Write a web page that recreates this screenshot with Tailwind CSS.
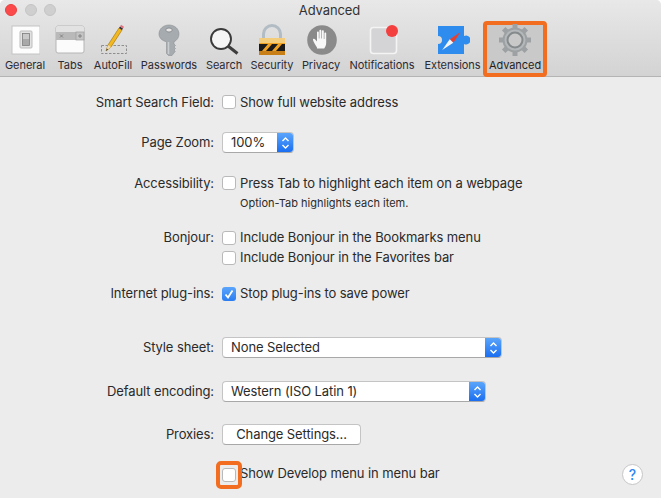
<!doctype html>
<html>
<head>
<meta charset="utf-8">
<script src="https://cdn.jsdelivr.net/npm/@tailwindcss/browser@4"></script>
</head>
<body class="bg-white">
<div class="w-[661px] h-[498px] overflow-hidden flex flex-col bg-[#ececec] rounded-t-[5px] font-['Inter','Liberation_Sans',sans-serif] text-[13px] text-[#2a2a2a] tracking-[-0.1px]">
  <!-- toolbar -->
  <div class="h-[77px] shrink-0 flex flex-col bg-gradient-to-b from-[#e8e8e8] to-[#d3d3d3] border-b border-[#b4b4b4]">
    <div class="h-[21px] shrink-0 relative flex items-center justify-center">
      <div class="absolute left-[5px] top-[4px] flex gap-[7.5px]">
        <span class="w-3 h-3 rounded-full bg-[#fc4a4a] border border-[#e8403f]"></span>
        <span class="w-3 h-3 rounded-full bg-[#cfcfcf] border border-[#c4c4c4]"></span>
        <span class="w-3 h-3 rounded-full bg-[#cfcfcf] border border-[#c4c4c4]"></span>
      </div>
      <span class="text-[#333] ml-[-2px]">Advanced</span>
    </div>
    <div class="flex-1 flex pl-[2px] text-[11px] text-[#2b2b33] tracking-[-0.05px]">
      <!-- General -->
      <div class="w-[46px] flex flex-col items-center">
        <svg width="30" height="32" viewBox="0 0 30 32" class="mt-[4px]"><rect x="2" y="1" width="28" height="28" fill="#fdfdfd" stroke="#c4c4c4"/><rect x="10" y="6" width="12" height="17" rx="1" fill="#e2e2e2" stroke="#bdbdbd"/><rect x="12.500" y="8.500" width="7" height="12" fill="#a9a9a9" stroke="#777" stroke-width=".7"/><rect x="13" y="9" width="6" height="5" fill="#c9c9c9"/></svg>
        <span class="whitespace-nowrap">General</span>
      </div>
      <!-- Tabs -->
      <div class="w-[44px] flex flex-col items-center">
        <svg width="30" height="32" viewBox="0 0 30 32" class="mt-[4px]"><rect x="1" y="1" width="28" height="27" rx="2" fill="#fbfbfb" stroke="#b5b5b5"/><path d="M1 3a2 2 0 0 1 2-2h24a2 2 0 0 1 2 2v4H1z" fill="#e2e2e2"/><rect x="1" y="7" width="28" height="8" fill="#b9b9b9"/><rect x="21" y="7" width="8" height="8" fill="#c4c4c4" stroke="#9d9d9d" stroke-width=".7"/><path d="M5 9.500l3 3M8 9.500l-3 3M25 9v4M23 11h4" stroke="#777" stroke-width=".8" fill="none"/></svg>
        <span class="whitespace-nowrap">Tabs</span>
      </div>
      <!-- AutoFill -->
      <div class="w-[42px] flex flex-col items-center">
        <svg width="30" height="32" viewBox="0 0 30 32" class="mt-[3px]"><rect x="3.500" y="21.500" width="25" height="8" fill="none" stroke="#8e8e8e" stroke-dasharray="2.500 1.500"/><g transform="translate(2 0)"><path d="M6 27l2-6L19 4l3 2L11 23z" fill="#f4b81f" stroke="#a97a10" stroke-width=".7"/><path d="M6 27l2-6 3 2z" fill="#eed9b0"/><path d="M6 27l.8-2.400 1.300.9z" fill="#333"/><path d="M19 4l1-1.600 3 2L22 6z" fill="#2f2f2f"/><path d="M20 2.400l1-1.600 3 2-1 1.600z" fill="#e0707f"/></g></svg>
        <span class="mt-[1px] whitespace-nowrap">AutoFill</span>
      </div>
      <!-- Passwords -->
      <div class="w-[70px] flex flex-col items-center">
        <svg width="30" height="32" viewBox="0 0 30 32" class="mt-[3px]"><path d="M15 1c5.500 0 10 3.800 10 9 0 3.600-2.200 6.400-5 7.800V20l1.500 1.500L20 23l1.500 1.500L20 26l1.300 1.300L18 31.500h-3.500l-2-2V17.800C7.500 16.400 5 13.600 5 10c0-5.200 4.500-9 10-9z" fill="#a6abaf" stroke="#8b9094" stroke-width=".6"/><ellipse cx="15" cy="6" rx="3.200" ry="2" fill="#e6e6e6" stroke="#74787c" stroke-width=".7"/><path d="M14.500 18v12" stroke="#caced1" stroke-width="1.500"/></svg>
        <span class="mt-[1px] whitespace-nowrap">Passwords</span>
      </div>
      <!-- Search -->
      <div class="w-[40px] flex flex-col items-center">
        <svg width="30" height="32" viewBox="0 0 30 32" class="mt-[3px]"><circle cx="12" cy="15" r="10" fill="#f5f5f5" stroke="#3a3a3a" stroke-width="1.900"/><path d="M19 22L28.500 29.500" stroke="#3d3d3d" stroke-width="3"/></svg>
        <span class="mt-[1px] whitespace-nowrap">Search</span>
      </div>
      <!-- Security -->
      <div class="w-[56px] flex flex-col items-center">
        <svg width="30" height="32" viewBox="0 0 30 32" class="mt-[3px]"><path d="M6.500 15V10a8.500 8.500 0 0 1 17 0v5" fill="none" stroke="#b2bcc4" stroke-width="3"/><rect x="2" y="14" width="26" height="17" rx="1.500" fill="#f0a224"/><path d="M2 14h26v5H2z" fill="#f3cd7b"/><path d="M2 20h26v7H2z" fill="#1b1b1b"/><path d="M5 27l6-7h4l-6 7zM15 27l6-7h4l-6 7z" fill="#f0a224"/><rect x="2" y="27" width="26" height="4" fill="#c87f18"/></svg>
        <span class="mt-[1px] whitespace-nowrap">Security</span>
      </div>
      <!-- Privacy -->
      <div class="w-[42px] flex flex-col items-center">
        <svg width="32" height="32" viewBox="0 0 32 32" class="mt-[3px]"><circle cx="17" cy="16" r="14.800" fill="#8a8a8a"/><g transform="translate(2 .5)"><path d="M10 23c-2-3-3.500-6-4-7.500-.4-1.200 1.300-1.800 2-.7L10 17V8c0-1.300 1.800-1.300 1.800 0v6h.6V6.300c0-1.400 1.900-1.400 1.900 0V14h.6V6.800c0-1.300 1.900-1.300 1.900 0V14.500h.6V9c0-1.300 1.800-1.300 1.800 0v9c0 3-1 4.500-2 6h-7.200z" fill="#f7f7f7"/></g></svg>
        <span class="mt-[1px] whitespace-nowrap">Privacy</span>
      </div>
      <!-- Notifications -->
      <div class="w-[80px] flex flex-col items-center">
        <svg width="32" height="32" viewBox="0 0 32 32" class="mt-[3px]"><rect x="4.500" y="3.500" width="26" height="26" rx="3" fill="#d4d4d6" stroke="#f4f4f4" stroke-width="1.600"/><circle cx="26" cy="7" r="6" fill="#f43f3f"/></svg>
        <span class="mt-[1px] whitespace-nowrap">Notifications</span>
      </div>
      <!-- Extensions -->
      <div class="w-[61px] flex flex-col items-center">
        <svg width="34" height="32" viewBox="0 0 34 32" class="mt-[3px]"><path d="M2 2h26v10a4.500 4.500 0 1 1 0 8v10H2V20a4 4 0 0 0 0-8z" fill="#2e8cee"/><path d="M24.500 8L13.700 15.200 17.300 18.800z" fill="#e8402f"/><path d="M6.200 26L13.700 15.200 17.300 18.800z" fill="#f5f5f5"/></svg>
        <span class="mt-[1px] whitespace-nowrap">Extensions</span>
      </div>
      <!-- Advanced -->
      <div class="w-[64px] h-[56px] flex flex-col items-center rounded-[4px] border-[4px] border-[#f26d1f] bg-[#c9c9c9] text-[#1f1f1f] z-10">
        <svg width="34" height="32" viewBox="0 0 34 32" class="mt-[-1px] shrink-0"><circle cx="17" cy="16" r="12.500" fill="#9da1a3"/><g stroke="#9da1a3" stroke-width="5"><path d="M17 0v32M1 16h32M5.700 4.700l22.600 22.600M28.300 4.700L5.700 27.300"/></g><circle cx="17" cy="16" r="10.500" fill="#b4b8ba"/><circle cx="17" cy="16" r="7.500" fill="#c9c9c9" stroke="#858a8c" stroke-width="2"/></svg>
        <span class="mt-[1px] whitespace-nowrap">Advanced</span>
      </div>
    </div>
  </div>

  <!-- settings -->
  <div class="flex-1 flex flex-col pt-[15px]">
    <div class="grid grid-cols-[214px_1fr] gap-x-[8px] h-[20px] items-center">
      <span class="text-right translate-y-[1px]">Smart Search Field:</span>
      <label class="flex items-center gap-[4px]"><span class="w-[14px] h-[14px] bg-white rounded-[3px] border border-[#b9b9b9]"></span><span class="translate-y-[1px]">Show full website address</span></label>
    </div>
    <div class="grid grid-cols-[214px_1fr] gap-x-[8px] h-[21px] items-center mt-[20px]">
      <span class="text-right">Page Zoom:</span>
      <div class="w-[72px] h-[21px] flex bg-white rounded-[4px] border border-[#c4c4c4] border-b-[#a8a8a8] overflow-hidden">
        <span class="flex-1 pl-[8px] leading-[19px]">100%</span>
        <span class="w-[16px] bg-gradient-to-b from-[#5aa5fb] to-[#1a6ef0] flex items-center justify-center"><svg width="9" height="14" viewBox="0 0 9 14" fill="none" stroke="#fff" stroke-width="1.400"><path d="M1.500 5L4.500 2l3 3M1.500 9l3 3 3-3"/></svg></span>
      </div>
    </div>
    <div class="grid grid-cols-[214px_1fr] gap-x-[8px] h-[20px] items-center mt-[20px]">
      <span class="text-right translate-y-[1px]">Accessibility:</span>
      <label class="flex items-center gap-[4px]"><span class="w-[14px] h-[14px] bg-white rounded-[3px] border border-[#b9b9b9]"></span><span class="translate-y-[1px]">Press Tab to highlight each item on a webpage</span></label>
    </div>
    <div class="grid grid-cols-[214px_1fr] gap-x-[8px] h-[20px] items-center">
      <span></span>
      <span class="pl-[18px] text-[11px] tracking-[0px]">Option-Tab highlights each item.</span>
    </div>
    <div class="grid grid-cols-[214px_1fr] gap-x-[8px] h-[20px] items-center mt-[15px]">
      <span class="text-right">Bonjour:</span>
      <label class="flex items-center gap-[4px]"><span class="w-[14px] h-[14px] bg-white rounded-[3px] border border-[#b9b9b9]"></span>Include Bonjour in the Bookmarks menu</label>
    </div>
    <div class="grid grid-cols-[214px_1fr] gap-x-[8px] h-[20px] items-center">
      <span></span>
      <label class="flex items-center gap-[4px]"><span class="w-[14px] h-[14px] bg-white rounded-[3px] border border-[#b9b9b9]"></span>Include Bonjour in the Favorites bar</label>
    </div>
    <div class="grid grid-cols-[214px_1fr] gap-x-[8px] h-[20px] items-center mt-[16px]">
      <span class="text-right">Internet plug-ins:</span>
      <label class="flex items-center gap-[4px]"><span class="w-[14px] h-[14px] rounded-[3px] bg-gradient-to-b from-[#5aa5fb] to-[#2a7df2] flex items-center justify-center"><svg width="12" height="12" viewBox="0 0 12 12" fill="none" stroke="#fff" stroke-width="1.800"><path d="M2.500 6.500L5 9.500 9.500 2.500"/></svg></span>Stop plug-ins to save power</label>
    </div>
    <div class="grid grid-cols-[214px_1fr] gap-x-[8px] h-[21px] items-center mt-[33px]">
      <span class="text-right">Style sheet:</span>
      <div class="w-[280px] h-[21px] flex bg-white rounded-[4px] border border-[#c4c4c4] border-b-[#a8a8a8] overflow-hidden">
        <span class="flex-1 pl-[8px] leading-[19px]">None Selected</span>
        <span class="w-[16px] bg-gradient-to-b from-[#5aa5fb] to-[#1a6ef0] flex items-center justify-center"><svg width="9" height="14" viewBox="0 0 9 14" fill="none" stroke="#fff" stroke-width="1.400"><path d="M1.500 5L4.500 2l3 3M1.500 9l3 3 3-3"/></svg></span>
      </div>
    </div>
    <div class="grid grid-cols-[214px_1fr] gap-x-[8px] h-[21px] items-center mt-[23px]">
      <span class="text-right">Default encoding:</span>
      <div class="w-[264px] h-[21px] flex bg-white rounded-[4px] border border-[#c4c4c4] border-b-[#a8a8a8] overflow-hidden">
        <span class="flex-1 pl-[8px] leading-[19px]">Western (ISO Latin 1)</span>
        <span class="w-[16px] bg-gradient-to-b from-[#5aa5fb] to-[#1a6ef0] flex items-center justify-center"><svg width="9" height="14" viewBox="0 0 9 14" fill="none" stroke="#fff" stroke-width="1.400"><path d="M1.500 5L4.500 2l3 3M1.500 9l3 3 3-3"/></svg></span>
      </div>
    </div>
    <div class="grid grid-cols-[214px_1fr] gap-x-[8px] h-[21px] items-center mt-[22px]">
      <span class="text-right">Proxies:</span>
      <button class="w-[139px] h-[21px] bg-white rounded-[4px] border border-[#c4c4c4] border-b-[#a8a8a8] leading-[19px] text-center">Change Settings...</button>
    </div>
    <div class="grid grid-cols-[214px_1fr] gap-x-[8px] h-[20px] items-center mt-[18px]">
      <span></span>
      <div class="flex items-center justify-between pr-[18px]">
        <label class="flex items-center gap-[4px]">
          <span class="relative w-[14px] h-[14px] bg-white rounded-[3px] border border-[#b9b9b9] translate-y-[1px]">
            <span class="absolute left-[-7px] top-[-8px] w-[26px] h-[28px] rounded-[5px] border-[4px] border-[#f26d1f]"></span>
          </span>Show Develop menu in menu bar</label>
        <button class="w-[21px] h-[21px] rounded-full bg-white border border-[#c6c6c6] text-[#2f86f6] text-[14px] font-medium leading-[19px] text-center translate-y-[1px]">?</button>
      </div>
    </div>
  </div>
</div>
</body>
</html>
